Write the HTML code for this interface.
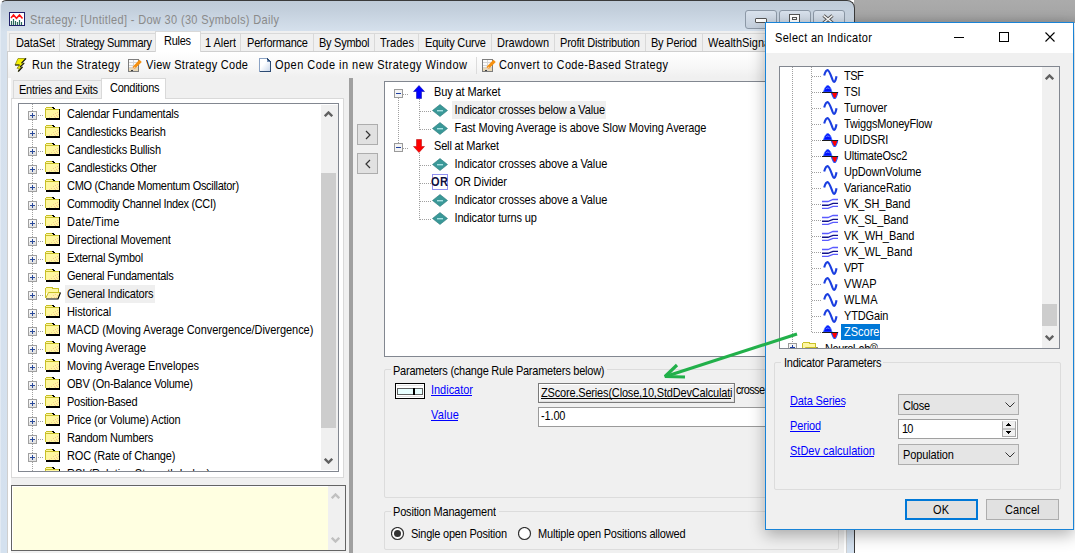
<!DOCTYPE html>
<html><head><meta charset="utf-8"><style>
html,body{margin:0;padding:0;width:1075px;height:553px;overflow:hidden;position:relative;background:#fff;font-family:"Liberation Sans", sans-serif;}
div,span,svg{position:absolute;box-sizing:border-box;}
.t{white-space:pre;line-height:normal;}
.ty{font-size:11px;transform:scaleY(1.12);transform-origin:0 0;}
</style></head><body>
<div style="left:854px;top:0px;width:221px;height:23px;background:linear-gradient(#ababab,#a6a6a6 60%,#9a9a9a);"></div>
<div style="left:0px;top:0px;width:855px;height:560px;background:linear-gradient(#bfcbd8 1px,#c4d0dd 10px,#d6e1ed 31px,#d4e1ef 100%);border:1px solid #3a3a3a;border-left-color:#e2eaf3;border-bottom:none;border-radius:6px 8px 0 0;"></div>
<svg style="position:absolute;left:9px;top:12px;" width="16" height="14" viewBox="0 0 16 14"><rect x="0.5" y="0.5" width="15" height="13" fill="#fff" stroke="#20206a"/><polyline points="2,6 4.5,3 7.5,6.3 10.5,3 13.5,6.5" fill="none" stroke="#ff1010" stroke-width="1.5"/><path d="M2.5,13 V9 M4.5,13 V7 M6.5,13 V9 M8.5,13 V10 M10.5,13 V8 M12.5,13 V10" stroke="#2a6a5c" stroke-width="1.2"/></svg>
<span id="t0" class="t ty" style="letter-spacing:0.342px;left:30px;top:13px;color:#8a8a8a;">Strategy: [Untitled] - Dow 30 (30 Symbols) Daily</span>
<div style="left:745px;top:10px;width:32px;height:19px;border:1px solid #8c98a6;border-radius:3px;background:linear-gradient(#d8e1ec,#c3cedb);"></div>
<div style="left:779px;top:10px;width:32px;height:19px;border:1px solid #8c98a6;border-radius:3px;background:linear-gradient(#d8e1ec,#c3cedb);"></div>
<div style="left:813px;top:10px;width:32px;height:19px;border:1px solid #8c98a6;border-radius:3px;background:linear-gradient(#d8e1ec,#c3cedb);"></div>
<div style="left:755px;top:18px;width:12px;height:5px;background:#fff;border:1px solid #555;border-radius:1px;"></div>
<div style="left:789px;top:14px;width:11px;height:10px;border:1px solid #555;background:#fff;"></div>
<div style="left:792px;top:17px;width:5px;height:3px;background:#fff;border:1px solid #555;"></div>
<svg style="position:absolute;left:822px;top:14px;" width="12" height="10" viewBox="0 0 12 10"><path d="M1.5,1.5 L10.5,9 M10.5,1.5 L1.5,9" stroke="#555" stroke-width="3.4"/><path d="M1.5,1.5 L10.5,9 M10.5,1.5 L1.5,9" stroke="#fff" stroke-width="1.6"/></svg>
<div style="left:7px;top:31px;width:840px;height:530px;background:#f0f0f0;"></div>
<div style="left:9px;top:33px;width:51px;height:19px;background:#f0f0f0;border:1px solid #d9d9d9;border-bottom:none;"></div>
<span id="t1" class="t ty" style="letter-spacing:-0.125px;left:16px;top:36px;color:#000;">DataSet</span>
<div style="left:59px;top:33px;width:97px;height:19px;background:#f0f0f0;border:1px solid #d9d9d9;border-bottom:none;"></div>
<span id="t2" class="t ty" style="letter-spacing:-0.340px;left:66px;top:36px;color:#000;">Strategy Summary</span>
<div style="left:200px;top:33px;width:41px;height:19px;background:#f0f0f0;border:1px solid #d9d9d9;border-bottom:none;"></div>
<span id="t3" class="t ty" style="letter-spacing:-0.031px;left:205px;top:36px;color:#000;">1 Alert</span>
<div style="left:240px;top:33px;width:74px;height:19px;background:#f0f0f0;border:1px solid #d9d9d9;border-bottom:none;"></div>
<span id="t4" class="t ty" style="letter-spacing:-0.198px;left:247px;top:36px;color:#000;">Performance</span>
<div style="left:313px;top:33px;width:62px;height:19px;background:#f0f0f0;border:1px solid #d9d9d9;border-bottom:none;"></div>
<span id="t5" class="t ty" style="letter-spacing:-0.260px;left:319px;top:36px;color:#000;">By Symbol</span>
<div style="left:374px;top:33px;width:45px;height:19px;background:#f0f0f0;border:1px solid #d9d9d9;border-bottom:none;"></div>
<span id="t6" class="t ty" style="letter-spacing:0.034px;left:380px;top:36px;color:#000;">Trades</span>
<div style="left:418px;top:33px;width:74px;height:19px;background:#f0f0f0;border:1px solid #d9d9d9;border-bottom:none;"></div>
<span id="t7" class="t ty" style="letter-spacing:-0.180px;left:425px;top:36px;color:#000;">Equity Curve</span>
<div style="left:491px;top:33px;width:64px;height:19px;background:#f0f0f0;border:1px solid #d9d9d9;border-bottom:none;"></div>
<span id="t8" class="t ty" style="letter-spacing:0.004px;left:497px;top:36px;color:#000;">Drawdown</span>
<div style="left:554px;top:33px;width:92px;height:19px;background:#f0f0f0;border:1px solid #d9d9d9;border-bottom:none;"></div>
<span id="t9" class="t ty" style="letter-spacing:-0.209px;left:560px;top:36px;color:#000;">Profit Distribution</span>
<div style="left:645px;top:33px;width:58px;height:19px;background:#f0f0f0;border:1px solid #d9d9d9;border-bottom:none;"></div>
<span id="t10" class="t ty" style="letter-spacing:-0.213px;left:651px;top:36px;color:#000;">By Period</span>
<div style="left:702px;top:33px;width:99px;height:19px;background:#f0f0f0;border:1px solid #d9d9d9;border-bottom:none;"></div>
<span id="t11" class="t ty" style="left:708px;top:36px;color:#000;">WealthSignals</span>
<div style="left:7px;top:51px;width:840px;height:510px;background:#fff;border:1px solid #cfcfcf;"></div>
<div style="left:8px;top:52px;width:838px;height:26px;background:linear-gradient(#ffffff,#f7f7f7 60%,#efefef);"></div>
<div style="left:11px;top:77px;width:833px;height:480px;background:#f0f0f0;"></div>
<div style="left:155px;top:31px;width:46px;height:21px;background:#fff;border:1px solid #d9d9d9;border-bottom:none;"></div>
<span id="t12" class="t ty" style="letter-spacing:-0.281px;left:164px;top:34px;color:#000;">Rules</span>
<svg style="position:absolute;left:14px;top:57px;" width="13" height="15" viewBox="0 0 13 15"><path d="M4,1.5 L12,1.5 L7.5,6.2 L10.2,6.2 L6,10 L8.5,10 L4.3,14.5 L5.3,11.3 L3,11.3 L5.5,8 L1,8 Z" fill="#f6f000" stroke="#8a8a10" stroke-width="0.8"/><path d="M12,1.5 L7.5,6.2 M10.2,6.2 L6,10 M8.5,10 L4.3,14.5 M1,8 L5.5,8" fill="none" stroke="#1a1a1a" stroke-width="1.1"/></svg>
<span id="t13" class="t ty" style="letter-spacing:0.362px;left:32px;top:58px;color:#000;">Run the Strategy</span>
<svg style="position:absolute;left:128px;top:59px;" width="14" height="13" viewBox="0 0 14 13" shape-rendering="crispEdges"><rect x="0.5" y="0.5" width="10" height="12" fill="#fbfbfb" stroke="#7d7d7d"/><rect x="1" y="9" width="9" height="3" fill="#e8d8b6"/><path d="M1,3.5 H10 M1,6 H10 M1,8.5 H10 M5.5,1 V12" stroke="#d4d4d4"/><path d="M12.6,1.8 L5.6,9" stroke="#f5900f" stroke-width="3.2" shape-rendering="auto"/><path d="M6.8,7.6 L4.2,10.6 L3.6,11.4 L4.6,11 L7.6,8.6 Z" fill="#f4c8a0" shape-rendering="auto"/><rect x="3" y="11" width="2" height="1" fill="#404040"/></svg>
<span id="t14" class="t ty" style="letter-spacing:0.292px;left:146px;top:58px;color:#000;">View Strategy Code</span>
<svg style="position:absolute;left:259px;top:58px;shape-rendering:crispEdges;" width="12" height="14" viewBox="0 0 12 14"><defs><linearGradient id="dg" x1="0" y1="0" x2="1" y2="1"><stop offset="0.4" stop-color="#ffffff"/><stop offset="1" stop-color="#c8d6ea"/></linearGradient></defs><path d="M0.5,0.5 H8 L11.5,4 V13.5 H0.5 Z" fill="url(#dg)"/><path d="M0.5,13.5 V0.5 H8" fill="none" stroke="#8aa2c4"/><path d="M8,0.5 L11.5,4 V13.5 H0.5" fill="none" stroke="#2c4a72" stroke-width="1.1"/><path d="M8.5,1.5 V3.5 H10.5" fill="none" stroke="#5a7aa8" stroke-width="0.8"/></svg>
<span id="t15" class="t ty" style="letter-spacing:0.473px;left:275px;top:58px;color:#000;">Open Code in new Strategy Window</span>
<div style="left:476px;top:57px;width:1px;height:17px;background:#dcdcdc;"></div>
<svg style="position:absolute;left:482px;top:59px;" width="14" height="13" viewBox="0 0 14 13" shape-rendering="crispEdges"><rect x="0.5" y="0.5" width="10" height="12" fill="#fbfbfb" stroke="#7d7d7d"/><rect x="1" y="9" width="9" height="3" fill="#e8d8b6"/><path d="M1,3.5 H10 M1,6 H10 M1,8.5 H10 M5.5,1 V12" stroke="#d4d4d4"/><path d="M12.6,1.8 L5.6,9" stroke="#f5900f" stroke-width="3.2" shape-rendering="auto"/><path d="M6.8,7.6 L4.2,10.6 L3.6,11.4 L4.6,11 L7.6,8.6 Z" fill="#f4c8a0" shape-rendering="auto"/><rect x="3" y="11" width="2" height="1" fill="#404040"/></svg>
<span id="t16" class="t ty" style="letter-spacing:0.345px;left:499px;top:58px;color:#000;">Convert to Code-Based Strategy</span>
<div style="left:13px;top:80px;width:89px;height:19px;background:#f0f0f0;border:1px solid #d9d9d9;border-bottom:none;"></div>
<span id="t17" class="t ty" style="letter-spacing:-0.222px;left:19px;top:83px;color:#000;">Entries and Exits</span>
<div style="left:11px;top:98px;width:333px;height:380px;background:#fff;border:1px solid #d9d9d9;"></div>
<div style="left:101px;top:78px;width:65px;height:21px;background:#fff;border:1px solid #d9d9d9;border-bottom:none;"></div>
<span id="t18" class="t ty" style="letter-spacing:-0.276px;left:110px;top:81px;color:#000;">Conditions</span>
<div style="left:18px;top:103px;width:321px;height:369px;background:#fff;border:1px solid #828790;"></div>
<div style="left:19px;top:104px;width:302px;height:367px;overflow:hidden;">
<div style="left:13px;top:0px;width:1px;height:367px;background:repeating-linear-gradient(#a0a0a0 0 1px,transparent 1px 2px);"></div>
<svg style="position:absolute;left:9px;top:7px;" width="9" height="9" viewBox="0 0 9 9" shape-rendering="crispEdges"><rect x="0.5" y="0.5" width="8" height="8" fill="#f6f6f6" stroke="#a0a0a0"/><rect x="1" y="5" width="7" height="3" fill="#e4e4e4"/><path d="M2,4.5 H7 M4.5,2 V7" stroke="#2a4a9a"/></svg>
<div style="left:19px;top:11px;width:6px;height:1px;background:repeating-linear-gradient(90deg,#a0a0a0 0 1px,transparent 1px 2px);"></div>
<svg style="position:absolute;left:26px;top:2px;" width="16" height="14" viewBox="0 0 16 14" shape-rendering="crispEdges"><path d="M1,2 H8 L9,3 H14 V12 H1 Z" fill="#fff7a0"/><path d="M8,8 h1v1h-1z M10,7 h1v1h-1z M12,6 h1v1h-1z M11,9 h1v1h-1z M13,8 h1v1h-1z M9,10 h1v1h-1z M12,10 h1v1h-1z M6,10 h1v1h-1z M4,11 h1v1h-1z M10,11 h1v1h-1z" fill="#f8c890"/><path d="M0.5,12 V2.5 L1.5,1.5 H7.5 M0.5,3 V2 M1,3.5 H14" fill="none" stroke="#c8c028"/><path d="M7.5,1 L9.5,3 M14.5,3 V12.5 H1" fill="none" stroke="#000"/><path d="M1,13.5 H15" stroke="#000"/></svg>
<span id="t19" class="t ty" style="letter-spacing:-0.275px;left:48px;top:3px;color:#000;">Calendar Fundamentals</span>
<svg style="position:absolute;left:9px;top:25px;" width="9" height="9" viewBox="0 0 9 9" shape-rendering="crispEdges"><rect x="0.5" y="0.5" width="8" height="8" fill="#f6f6f6" stroke="#a0a0a0"/><rect x="1" y="5" width="7" height="3" fill="#e4e4e4"/><path d="M2,4.5 H7 M4.5,2 V7" stroke="#2a4a9a"/></svg>
<div style="left:19px;top:29px;width:6px;height:1px;background:repeating-linear-gradient(90deg,#a0a0a0 0 1px,transparent 1px 2px);"></div>
<svg style="position:absolute;left:26px;top:20px;" width="16" height="14" viewBox="0 0 16 14" shape-rendering="crispEdges"><path d="M1,2 H8 L9,3 H14 V12 H1 Z" fill="#fff7a0"/><path d="M8,8 h1v1h-1z M10,7 h1v1h-1z M12,6 h1v1h-1z M11,9 h1v1h-1z M13,8 h1v1h-1z M9,10 h1v1h-1z M12,10 h1v1h-1z M6,10 h1v1h-1z M4,11 h1v1h-1z M10,11 h1v1h-1z" fill="#f8c890"/><path d="M0.5,12 V2.5 L1.5,1.5 H7.5 M0.5,3 V2 M1,3.5 H14" fill="none" stroke="#c8c028"/><path d="M7.5,1 L9.5,3 M14.5,3 V12.5 H1" fill="none" stroke="#000"/><path d="M1,13.5 H15" stroke="#000"/></svg>
<span id="t20" class="t ty" style="letter-spacing:-0.201px;left:48px;top:21px;color:#000;">Candlesticks Bearish</span>
<svg style="position:absolute;left:9px;top:43px;" width="9" height="9" viewBox="0 0 9 9" shape-rendering="crispEdges"><rect x="0.5" y="0.5" width="8" height="8" fill="#f6f6f6" stroke="#a0a0a0"/><rect x="1" y="5" width="7" height="3" fill="#e4e4e4"/><path d="M2,4.5 H7 M4.5,2 V7" stroke="#2a4a9a"/></svg>
<div style="left:19px;top:47px;width:6px;height:1px;background:repeating-linear-gradient(90deg,#a0a0a0 0 1px,transparent 1px 2px);"></div>
<svg style="position:absolute;left:26px;top:38px;" width="16" height="14" viewBox="0 0 16 14" shape-rendering="crispEdges"><path d="M1,2 H8 L9,3 H14 V12 H1 Z" fill="#fff7a0"/><path d="M8,8 h1v1h-1z M10,7 h1v1h-1z M12,6 h1v1h-1z M11,9 h1v1h-1z M13,8 h1v1h-1z M9,10 h1v1h-1z M12,10 h1v1h-1z M6,10 h1v1h-1z M4,11 h1v1h-1z M10,11 h1v1h-1z" fill="#f8c890"/><path d="M0.5,12 V2.5 L1.5,1.5 H7.5 M0.5,3 V2 M1,3.5 H14" fill="none" stroke="#c8c028"/><path d="M7.5,1 L9.5,3 M14.5,3 V12.5 H1" fill="none" stroke="#000"/><path d="M1,13.5 H15" stroke="#000"/></svg>
<span id="t21" class="t ty" style="letter-spacing:-0.201px;left:48px;top:39px;color:#000;">Candlesticks Bullish</span>
<svg style="position:absolute;left:9px;top:61px;" width="9" height="9" viewBox="0 0 9 9" shape-rendering="crispEdges"><rect x="0.5" y="0.5" width="8" height="8" fill="#f6f6f6" stroke="#a0a0a0"/><rect x="1" y="5" width="7" height="3" fill="#e4e4e4"/><path d="M2,4.5 H7 M4.5,2 V7" stroke="#2a4a9a"/></svg>
<div style="left:19px;top:65px;width:6px;height:1px;background:repeating-linear-gradient(90deg,#a0a0a0 0 1px,transparent 1px 2px);"></div>
<svg style="position:absolute;left:26px;top:56px;" width="16" height="14" viewBox="0 0 16 14" shape-rendering="crispEdges"><path d="M1,2 H8 L9,3 H14 V12 H1 Z" fill="#fff7a0"/><path d="M8,8 h1v1h-1z M10,7 h1v1h-1z M12,6 h1v1h-1z M11,9 h1v1h-1z M13,8 h1v1h-1z M9,10 h1v1h-1z M12,10 h1v1h-1z M6,10 h1v1h-1z M4,11 h1v1h-1z M10,11 h1v1h-1z" fill="#f8c890"/><path d="M0.5,12 V2.5 L1.5,1.5 H7.5 M0.5,3 V2 M1,3.5 H14" fill="none" stroke="#c8c028"/><path d="M7.5,1 L9.5,3 M14.5,3 V12.5 H1" fill="none" stroke="#000"/><path d="M1,13.5 H15" stroke="#000"/></svg>
<span id="t22" class="t ty" style="letter-spacing:-0.185px;left:48px;top:57px;color:#000;">Candlesticks Other</span>
<svg style="position:absolute;left:9px;top:79px;" width="9" height="9" viewBox="0 0 9 9" shape-rendering="crispEdges"><rect x="0.5" y="0.5" width="8" height="8" fill="#f6f6f6" stroke="#a0a0a0"/><rect x="1" y="5" width="7" height="3" fill="#e4e4e4"/><path d="M2,4.5 H7 M4.5,2 V7" stroke="#2a4a9a"/></svg>
<div style="left:19px;top:83px;width:6px;height:1px;background:repeating-linear-gradient(90deg,#a0a0a0 0 1px,transparent 1px 2px);"></div>
<svg style="position:absolute;left:26px;top:74px;" width="16" height="14" viewBox="0 0 16 14" shape-rendering="crispEdges"><path d="M1,2 H8 L9,3 H14 V12 H1 Z" fill="#fff7a0"/><path d="M8,8 h1v1h-1z M10,7 h1v1h-1z M12,6 h1v1h-1z M11,9 h1v1h-1z M13,8 h1v1h-1z M9,10 h1v1h-1z M12,10 h1v1h-1z M6,10 h1v1h-1z M4,11 h1v1h-1z M10,11 h1v1h-1z" fill="#f8c890"/><path d="M0.5,12 V2.5 L1.5,1.5 H7.5 M0.5,3 V2 M1,3.5 H14" fill="none" stroke="#c8c028"/><path d="M7.5,1 L9.5,3 M14.5,3 V12.5 H1" fill="none" stroke="#000"/><path d="M1,13.5 H15" stroke="#000"/></svg>
<span id="t23" class="t ty" style="letter-spacing:-0.305px;left:48px;top:75px;color:#000;">CMO (Chande Momentum Oscillator)</span>
<svg style="position:absolute;left:9px;top:97px;" width="9" height="9" viewBox="0 0 9 9" shape-rendering="crispEdges"><rect x="0.5" y="0.5" width="8" height="8" fill="#f6f6f6" stroke="#a0a0a0"/><rect x="1" y="5" width="7" height="3" fill="#e4e4e4"/><path d="M2,4.5 H7 M4.5,2 V7" stroke="#2a4a9a"/></svg>
<div style="left:19px;top:101px;width:6px;height:1px;background:repeating-linear-gradient(90deg,#a0a0a0 0 1px,transparent 1px 2px);"></div>
<svg style="position:absolute;left:26px;top:92px;" width="16" height="14" viewBox="0 0 16 14" shape-rendering="crispEdges"><path d="M1,2 H8 L9,3 H14 V12 H1 Z" fill="#fff7a0"/><path d="M8,8 h1v1h-1z M10,7 h1v1h-1z M12,6 h1v1h-1z M11,9 h1v1h-1z M13,8 h1v1h-1z M9,10 h1v1h-1z M12,10 h1v1h-1z M6,10 h1v1h-1z M4,11 h1v1h-1z M10,11 h1v1h-1z" fill="#f8c890"/><path d="M0.5,12 V2.5 L1.5,1.5 H7.5 M0.5,3 V2 M1,3.5 H14" fill="none" stroke="#c8c028"/><path d="M7.5,1 L9.5,3 M14.5,3 V12.5 H1" fill="none" stroke="#000"/><path d="M1,13.5 H15" stroke="#000"/></svg>
<span id="t24" class="t ty" style="letter-spacing:-0.345px;left:48px;top:93px;color:#000;">Commodity Channel Index (CCI)</span>
<svg style="position:absolute;left:9px;top:115px;" width="9" height="9" viewBox="0 0 9 9" shape-rendering="crispEdges"><rect x="0.5" y="0.5" width="8" height="8" fill="#f6f6f6" stroke="#a0a0a0"/><rect x="1" y="5" width="7" height="3" fill="#e4e4e4"/><path d="M2,4.5 H7 M4.5,2 V7" stroke="#2a4a9a"/></svg>
<div style="left:19px;top:119px;width:6px;height:1px;background:repeating-linear-gradient(90deg,#a0a0a0 0 1px,transparent 1px 2px);"></div>
<svg style="position:absolute;left:26px;top:110px;" width="16" height="14" viewBox="0 0 16 14" shape-rendering="crispEdges"><path d="M1,2 H8 L9,3 H14 V12 H1 Z" fill="#fff7a0"/><path d="M8,8 h1v1h-1z M10,7 h1v1h-1z M12,6 h1v1h-1z M11,9 h1v1h-1z M13,8 h1v1h-1z M9,10 h1v1h-1z M12,10 h1v1h-1z M6,10 h1v1h-1z M4,11 h1v1h-1z M10,11 h1v1h-1z" fill="#f8c890"/><path d="M0.5,12 V2.5 L1.5,1.5 H7.5 M0.5,3 V2 M1,3.5 H14" fill="none" stroke="#c8c028"/><path d="M7.5,1 L9.5,3 M14.5,3 V12.5 H1" fill="none" stroke="#000"/><path d="M1,13.5 H15" stroke="#000"/></svg>
<span id="t25" class="t ty" style="letter-spacing:0.259px;left:48px;top:111px;color:#000;">Date/Time</span>
<svg style="position:absolute;left:9px;top:133px;" width="9" height="9" viewBox="0 0 9 9" shape-rendering="crispEdges"><rect x="0.5" y="0.5" width="8" height="8" fill="#f6f6f6" stroke="#a0a0a0"/><rect x="1" y="5" width="7" height="3" fill="#e4e4e4"/><path d="M2,4.5 H7 M4.5,2 V7" stroke="#2a4a9a"/></svg>
<div style="left:19px;top:137px;width:6px;height:1px;background:repeating-linear-gradient(90deg,#a0a0a0 0 1px,transparent 1px 2px);"></div>
<svg style="position:absolute;left:26px;top:128px;" width="16" height="14" viewBox="0 0 16 14" shape-rendering="crispEdges"><path d="M1,2 H8 L9,3 H14 V12 H1 Z" fill="#fff7a0"/><path d="M8,8 h1v1h-1z M10,7 h1v1h-1z M12,6 h1v1h-1z M11,9 h1v1h-1z M13,8 h1v1h-1z M9,10 h1v1h-1z M12,10 h1v1h-1z M6,10 h1v1h-1z M4,11 h1v1h-1z M10,11 h1v1h-1z" fill="#f8c890"/><path d="M0.5,12 V2.5 L1.5,1.5 H7.5 M0.5,3 V2 M1,3.5 H14" fill="none" stroke="#c8c028"/><path d="M7.5,1 L9.5,3 M14.5,3 V12.5 H1" fill="none" stroke="#000"/><path d="M1,13.5 H15" stroke="#000"/></svg>
<span id="t26" class="t ty" style="letter-spacing:-0.136px;left:48px;top:129px;color:#000;">Directional Movement</span>
<svg style="position:absolute;left:9px;top:151px;" width="9" height="9" viewBox="0 0 9 9" shape-rendering="crispEdges"><rect x="0.5" y="0.5" width="8" height="8" fill="#f6f6f6" stroke="#a0a0a0"/><rect x="1" y="5" width="7" height="3" fill="#e4e4e4"/><path d="M2,4.5 H7 M4.5,2 V7" stroke="#2a4a9a"/></svg>
<div style="left:19px;top:155px;width:6px;height:1px;background:repeating-linear-gradient(90deg,#a0a0a0 0 1px,transparent 1px 2px);"></div>
<svg style="position:absolute;left:26px;top:146px;" width="16" height="14" viewBox="0 0 16 14" shape-rendering="crispEdges"><path d="M1,2 H8 L9,3 H14 V12 H1 Z" fill="#fff7a0"/><path d="M8,8 h1v1h-1z M10,7 h1v1h-1z M12,6 h1v1h-1z M11,9 h1v1h-1z M13,8 h1v1h-1z M9,10 h1v1h-1z M12,10 h1v1h-1z M6,10 h1v1h-1z M4,11 h1v1h-1z M10,11 h1v1h-1z" fill="#f8c890"/><path d="M0.5,12 V2.5 L1.5,1.5 H7.5 M0.5,3 V2 M1,3.5 H14" fill="none" stroke="#c8c028"/><path d="M7.5,1 L9.5,3 M14.5,3 V12.5 H1" fill="none" stroke="#000"/><path d="M1,13.5 H15" stroke="#000"/></svg>
<span id="t27" class="t ty" style="letter-spacing:-0.285px;left:48px;top:147px;color:#000;">External Symbol</span>
<svg style="position:absolute;left:9px;top:169px;" width="9" height="9" viewBox="0 0 9 9" shape-rendering="crispEdges"><rect x="0.5" y="0.5" width="8" height="8" fill="#f6f6f6" stroke="#a0a0a0"/><rect x="1" y="5" width="7" height="3" fill="#e4e4e4"/><path d="M2,4.5 H7 M4.5,2 V7" stroke="#2a4a9a"/></svg>
<div style="left:19px;top:173px;width:6px;height:1px;background:repeating-linear-gradient(90deg,#a0a0a0 0 1px,transparent 1px 2px);"></div>
<svg style="position:absolute;left:26px;top:164px;" width="16" height="14" viewBox="0 0 16 14" shape-rendering="crispEdges"><path d="M1,2 H8 L9,3 H14 V12 H1 Z" fill="#fff7a0"/><path d="M8,8 h1v1h-1z M10,7 h1v1h-1z M12,6 h1v1h-1z M11,9 h1v1h-1z M13,8 h1v1h-1z M9,10 h1v1h-1z M12,10 h1v1h-1z M6,10 h1v1h-1z M4,11 h1v1h-1z M10,11 h1v1h-1z" fill="#f8c890"/><path d="M0.5,12 V2.5 L1.5,1.5 H7.5 M0.5,3 V2 M1,3.5 H14" fill="none" stroke="#c8c028"/><path d="M7.5,1 L9.5,3 M14.5,3 V12.5 H1" fill="none" stroke="#000"/><path d="M1,13.5 H15" stroke="#000"/></svg>
<span id="t28" class="t ty" style="letter-spacing:-0.274px;left:48px;top:165px;color:#000;">General Fundamentals</span>
<svg style="position:absolute;left:9px;top:187px;" width="9" height="9" viewBox="0 0 9 9" shape-rendering="crispEdges"><rect x="0.5" y="0.5" width="8" height="8" fill="#f6f6f6" stroke="#a0a0a0"/><rect x="1" y="5" width="7" height="3" fill="#e4e4e4"/><path d="M2,4.5 H7 M4.5,2 V7" stroke="#2a4a9a"/></svg>
<div style="left:19px;top:191px;width:6px;height:1px;background:repeating-linear-gradient(90deg,#a0a0a0 0 1px,transparent 1px 2px);"></div>
<div style="left:46px;top:181px;width:90px;height:18px;background:#efefef;"></div>
<svg style="position:absolute;left:26px;top:182px;" width="16" height="14" viewBox="0 0 16 14" shape-rendering="crispEdges"><path d="M1,2 H7 L8,3 H13 V7 H1 Z" fill="#fff7a0"/><path d="M0.5,12 V2.5 L1.5,1.5 H7 L8,2.5 H13.5 V6" fill="none" stroke="#c8c028"/><path d="M3.5,6.5 H15.5 L13,12.5 H0.8 Z" fill="#fff3a8" shape-rendering="auto"/><path d="M8,9 h1v1h-1z M10,8 h1v1h-1z M12,9 h1v1h-1z M9,11 h1v1h-1z M11,11 h1v1h-1z M6,11 h1v1h-1z" fill="#f8c890"/><path d="M3.5,6.5 H15 M0.8,12 L3.5,6.5" fill="none" stroke="#c8c028" shape-rendering="auto"/><path d="M15.5,6.5 L13,13 H1" fill="none" stroke="#000" stroke-width="1.2" shape-rendering="auto"/></svg>
<span id="t29" class="t ty" style="letter-spacing:-0.199px;left:48px;top:183px;color:#000;">General Indicators</span>
<svg style="position:absolute;left:9px;top:205px;" width="9" height="9" viewBox="0 0 9 9" shape-rendering="crispEdges"><rect x="0.5" y="0.5" width="8" height="8" fill="#f6f6f6" stroke="#a0a0a0"/><rect x="1" y="5" width="7" height="3" fill="#e4e4e4"/><path d="M2,4.5 H7 M4.5,2 V7" stroke="#2a4a9a"/></svg>
<div style="left:19px;top:209px;width:6px;height:1px;background:repeating-linear-gradient(90deg,#a0a0a0 0 1px,transparent 1px 2px);"></div>
<svg style="position:absolute;left:26px;top:200px;" width="16" height="14" viewBox="0 0 16 14" shape-rendering="crispEdges"><path d="M1,2 H8 L9,3 H14 V12 H1 Z" fill="#fff7a0"/><path d="M8,8 h1v1h-1z M10,7 h1v1h-1z M12,6 h1v1h-1z M11,9 h1v1h-1z M13,8 h1v1h-1z M9,10 h1v1h-1z M12,10 h1v1h-1z M6,10 h1v1h-1z M4,11 h1v1h-1z M10,11 h1v1h-1z" fill="#f8c890"/><path d="M0.5,12 V2.5 L1.5,1.5 H7.5 M0.5,3 V2 M1,3.5 H14" fill="none" stroke="#c8c028"/><path d="M7.5,1 L9.5,3 M14.5,3 V12.5 H1" fill="none" stroke="#000"/><path d="M1,13.5 H15" stroke="#000"/></svg>
<span id="t30" class="t ty" style="letter-spacing:-0.115px;left:48px;top:201px;color:#000;">Historical</span>
<svg style="position:absolute;left:9px;top:223px;" width="9" height="9" viewBox="0 0 9 9" shape-rendering="crispEdges"><rect x="0.5" y="0.5" width="8" height="8" fill="#f6f6f6" stroke="#a0a0a0"/><rect x="1" y="5" width="7" height="3" fill="#e4e4e4"/><path d="M2,4.5 H7 M4.5,2 V7" stroke="#2a4a9a"/></svg>
<div style="left:19px;top:227px;width:6px;height:1px;background:repeating-linear-gradient(90deg,#a0a0a0 0 1px,transparent 1px 2px);"></div>
<svg style="position:absolute;left:26px;top:218px;" width="16" height="14" viewBox="0 0 16 14" shape-rendering="crispEdges"><path d="M1,2 H8 L9,3 H14 V12 H1 Z" fill="#fff7a0"/><path d="M8,8 h1v1h-1z M10,7 h1v1h-1z M12,6 h1v1h-1z M11,9 h1v1h-1z M13,8 h1v1h-1z M9,10 h1v1h-1z M12,10 h1v1h-1z M6,10 h1v1h-1z M4,11 h1v1h-1z M10,11 h1v1h-1z" fill="#f8c890"/><path d="M0.5,12 V2.5 L1.5,1.5 H7.5 M0.5,3 V2 M1,3.5 H14" fill="none" stroke="#c8c028"/><path d="M7.5,1 L9.5,3 M14.5,3 V12.5 H1" fill="none" stroke="#000"/><path d="M1,13.5 H15" stroke="#000"/></svg>
<span id="t31" class="t ty" style="letter-spacing:-0.054px;left:48px;top:219px;color:#000;">MACD (Moving Average Convergence/Divergence)</span>
<svg style="position:absolute;left:9px;top:241px;" width="9" height="9" viewBox="0 0 9 9" shape-rendering="crispEdges"><rect x="0.5" y="0.5" width="8" height="8" fill="#f6f6f6" stroke="#a0a0a0"/><rect x="1" y="5" width="7" height="3" fill="#e4e4e4"/><path d="M2,4.5 H7 M4.5,2 V7" stroke="#2a4a9a"/></svg>
<div style="left:19px;top:245px;width:6px;height:1px;background:repeating-linear-gradient(90deg,#a0a0a0 0 1px,transparent 1px 2px);"></div>
<svg style="position:absolute;left:26px;top:236px;" width="16" height="14" viewBox="0 0 16 14" shape-rendering="crispEdges"><path d="M1,2 H8 L9,3 H14 V12 H1 Z" fill="#fff7a0"/><path d="M8,8 h1v1h-1z M10,7 h1v1h-1z M12,6 h1v1h-1z M11,9 h1v1h-1z M13,8 h1v1h-1z M9,10 h1v1h-1z M12,10 h1v1h-1z M6,10 h1v1h-1z M4,11 h1v1h-1z M10,11 h1v1h-1z" fill="#f8c890"/><path d="M0.5,12 V2.5 L1.5,1.5 H7.5 M0.5,3 V2 M1,3.5 H14" fill="none" stroke="#c8c028"/><path d="M7.5,1 L9.5,3 M14.5,3 V12.5 H1" fill="none" stroke="#000"/><path d="M1,13.5 H15" stroke="#000"/></svg>
<span id="t32" class="t ty" style="letter-spacing:0.032px;left:48px;top:237px;color:#000;">Moving Average</span>
<svg style="position:absolute;left:9px;top:259px;" width="9" height="9" viewBox="0 0 9 9" shape-rendering="crispEdges"><rect x="0.5" y="0.5" width="8" height="8" fill="#f6f6f6" stroke="#a0a0a0"/><rect x="1" y="5" width="7" height="3" fill="#e4e4e4"/><path d="M2,4.5 H7 M4.5,2 V7" stroke="#2a4a9a"/></svg>
<div style="left:19px;top:263px;width:6px;height:1px;background:repeating-linear-gradient(90deg,#a0a0a0 0 1px,transparent 1px 2px);"></div>
<svg style="position:absolute;left:26px;top:254px;" width="16" height="14" viewBox="0 0 16 14" shape-rendering="crispEdges"><path d="M1,2 H8 L9,3 H14 V12 H1 Z" fill="#fff7a0"/><path d="M8,8 h1v1h-1z M10,7 h1v1h-1z M12,6 h1v1h-1z M11,9 h1v1h-1z M13,8 h1v1h-1z M9,10 h1v1h-1z M12,10 h1v1h-1z M6,10 h1v1h-1z M4,11 h1v1h-1z M10,11 h1v1h-1z" fill="#f8c890"/><path d="M0.5,12 V2.5 L1.5,1.5 H7.5 M0.5,3 V2 M1,3.5 H14" fill="none" stroke="#c8c028"/><path d="M7.5,1 L9.5,3 M14.5,3 V12.5 H1" fill="none" stroke="#000"/><path d="M1,13.5 H15" stroke="#000"/></svg>
<span id="t33" class="t ty" style="letter-spacing:-0.048px;left:48px;top:255px;color:#000;">Moving Average Envelopes</span>
<svg style="position:absolute;left:9px;top:277px;" width="9" height="9" viewBox="0 0 9 9" shape-rendering="crispEdges"><rect x="0.5" y="0.5" width="8" height="8" fill="#f6f6f6" stroke="#a0a0a0"/><rect x="1" y="5" width="7" height="3" fill="#e4e4e4"/><path d="M2,4.5 H7 M4.5,2 V7" stroke="#2a4a9a"/></svg>
<div style="left:19px;top:281px;width:6px;height:1px;background:repeating-linear-gradient(90deg,#a0a0a0 0 1px,transparent 1px 2px);"></div>
<svg style="position:absolute;left:26px;top:272px;" width="16" height="14" viewBox="0 0 16 14" shape-rendering="crispEdges"><path d="M1,2 H8 L9,3 H14 V12 H1 Z" fill="#fff7a0"/><path d="M8,8 h1v1h-1z M10,7 h1v1h-1z M12,6 h1v1h-1z M11,9 h1v1h-1z M13,8 h1v1h-1z M9,10 h1v1h-1z M12,10 h1v1h-1z M6,10 h1v1h-1z M4,11 h1v1h-1z M10,11 h1v1h-1z" fill="#f8c890"/><path d="M0.5,12 V2.5 L1.5,1.5 H7.5 M0.5,3 V2 M1,3.5 H14" fill="none" stroke="#c8c028"/><path d="M7.5,1 L9.5,3 M14.5,3 V12.5 H1" fill="none" stroke="#000"/><path d="M1,13.5 H15" stroke="#000"/></svg>
<span id="t34" class="t ty" style="letter-spacing:-0.248px;left:48px;top:273px;color:#000;">OBV (On-Balance Volume)</span>
<svg style="position:absolute;left:9px;top:295px;" width="9" height="9" viewBox="0 0 9 9" shape-rendering="crispEdges"><rect x="0.5" y="0.5" width="8" height="8" fill="#f6f6f6" stroke="#a0a0a0"/><rect x="1" y="5" width="7" height="3" fill="#e4e4e4"/><path d="M2,4.5 H7 M4.5,2 V7" stroke="#2a4a9a"/></svg>
<div style="left:19px;top:299px;width:6px;height:1px;background:repeating-linear-gradient(90deg,#a0a0a0 0 1px,transparent 1px 2px);"></div>
<svg style="position:absolute;left:26px;top:290px;" width="16" height="14" viewBox="0 0 16 14" shape-rendering="crispEdges"><path d="M1,2 H8 L9,3 H14 V12 H1 Z" fill="#fff7a0"/><path d="M8,8 h1v1h-1z M10,7 h1v1h-1z M12,6 h1v1h-1z M11,9 h1v1h-1z M13,8 h1v1h-1z M9,10 h1v1h-1z M12,10 h1v1h-1z M6,10 h1v1h-1z M4,11 h1v1h-1z M10,11 h1v1h-1z" fill="#f8c890"/><path d="M0.5,12 V2.5 L1.5,1.5 H7.5 M0.5,3 V2 M1,3.5 H14" fill="none" stroke="#c8c028"/><path d="M7.5,1 L9.5,3 M14.5,3 V12.5 H1" fill="none" stroke="#000"/><path d="M1,13.5 H15" stroke="#000"/></svg>
<span id="t35" class="t ty" style="letter-spacing:-0.262px;left:48px;top:291px;color:#000;">Position-Based</span>
<svg style="position:absolute;left:9px;top:313px;" width="9" height="9" viewBox="0 0 9 9" shape-rendering="crispEdges"><rect x="0.5" y="0.5" width="8" height="8" fill="#f6f6f6" stroke="#a0a0a0"/><rect x="1" y="5" width="7" height="3" fill="#e4e4e4"/><path d="M2,4.5 H7 M4.5,2 V7" stroke="#2a4a9a"/></svg>
<div style="left:19px;top:317px;width:6px;height:1px;background:repeating-linear-gradient(90deg,#a0a0a0 0 1px,transparent 1px 2px);"></div>
<svg style="position:absolute;left:26px;top:308px;" width="16" height="14" viewBox="0 0 16 14" shape-rendering="crispEdges"><path d="M1,2 H8 L9,3 H14 V12 H1 Z" fill="#fff7a0"/><path d="M8,8 h1v1h-1z M10,7 h1v1h-1z M12,6 h1v1h-1z M11,9 h1v1h-1z M13,8 h1v1h-1z M9,10 h1v1h-1z M12,10 h1v1h-1z M6,10 h1v1h-1z M4,11 h1v1h-1z M10,11 h1v1h-1z" fill="#f8c890"/><path d="M0.5,12 V2.5 L1.5,1.5 H7.5 M0.5,3 V2 M1,3.5 H14" fill="none" stroke="#c8c028"/><path d="M7.5,1 L9.5,3 M14.5,3 V12.5 H1" fill="none" stroke="#000"/><path d="M1,13.5 H15" stroke="#000"/></svg>
<span id="t36" class="t ty" style="letter-spacing:-0.191px;left:48px;top:309px;color:#000;">Price (or Volume) Action</span>
<svg style="position:absolute;left:9px;top:331px;" width="9" height="9" viewBox="0 0 9 9" shape-rendering="crispEdges"><rect x="0.5" y="0.5" width="8" height="8" fill="#f6f6f6" stroke="#a0a0a0"/><rect x="1" y="5" width="7" height="3" fill="#e4e4e4"/><path d="M2,4.5 H7 M4.5,2 V7" stroke="#2a4a9a"/></svg>
<div style="left:19px;top:335px;width:6px;height:1px;background:repeating-linear-gradient(90deg,#a0a0a0 0 1px,transparent 1px 2px);"></div>
<svg style="position:absolute;left:26px;top:326px;" width="16" height="14" viewBox="0 0 16 14" shape-rendering="crispEdges"><path d="M1,2 H8 L9,3 H14 V12 H1 Z" fill="#fff7a0"/><path d="M8,8 h1v1h-1z M10,7 h1v1h-1z M12,6 h1v1h-1z M11,9 h1v1h-1z M13,8 h1v1h-1z M9,10 h1v1h-1z M12,10 h1v1h-1z M6,10 h1v1h-1z M4,11 h1v1h-1z M10,11 h1v1h-1z" fill="#f8c890"/><path d="M0.5,12 V2.5 L1.5,1.5 H7.5 M0.5,3 V2 M1,3.5 H14" fill="none" stroke="#c8c028"/><path d="M7.5,1 L9.5,3 M14.5,3 V12.5 H1" fill="none" stroke="#000"/><path d="M1,13.5 H15" stroke="#000"/></svg>
<span id="t37" class="t ty" style="letter-spacing:-0.236px;left:48px;top:327px;color:#000;">Random Numbers</span>
<svg style="position:absolute;left:9px;top:349px;" width="9" height="9" viewBox="0 0 9 9" shape-rendering="crispEdges"><rect x="0.5" y="0.5" width="8" height="8" fill="#f6f6f6" stroke="#a0a0a0"/><rect x="1" y="5" width="7" height="3" fill="#e4e4e4"/><path d="M2,4.5 H7 M4.5,2 V7" stroke="#2a4a9a"/></svg>
<div style="left:19px;top:353px;width:6px;height:1px;background:repeating-linear-gradient(90deg,#a0a0a0 0 1px,transparent 1px 2px);"></div>
<svg style="position:absolute;left:26px;top:344px;" width="16" height="14" viewBox="0 0 16 14" shape-rendering="crispEdges"><path d="M1,2 H8 L9,3 H14 V12 H1 Z" fill="#fff7a0"/><path d="M8,8 h1v1h-1z M10,7 h1v1h-1z M12,6 h1v1h-1z M11,9 h1v1h-1z M13,8 h1v1h-1z M9,10 h1v1h-1z M12,10 h1v1h-1z M6,10 h1v1h-1z M4,11 h1v1h-1z M10,11 h1v1h-1z" fill="#f8c890"/><path d="M0.5,12 V2.5 L1.5,1.5 H7.5 M0.5,3 V2 M1,3.5 H14" fill="none" stroke="#c8c028"/><path d="M7.5,1 L9.5,3 M14.5,3 V12.5 H1" fill="none" stroke="#000"/><path d="M1,13.5 H15" stroke="#000"/></svg>
<span id="t38" class="t ty" style="letter-spacing:-0.184px;left:48px;top:345px;color:#000;">ROC (Rate of Change)</span>
<svg style="position:absolute;left:9px;top:367px;" width="9" height="9" viewBox="0 0 9 9" shape-rendering="crispEdges"><rect x="0.5" y="0.5" width="8" height="8" fill="#f6f6f6" stroke="#a0a0a0"/><rect x="1" y="5" width="7" height="3" fill="#e4e4e4"/><path d="M2,4.5 H7 M4.5,2 V7" stroke="#2a4a9a"/></svg>
<div style="left:19px;top:371px;width:6px;height:1px;background:repeating-linear-gradient(90deg,#a0a0a0 0 1px,transparent 1px 2px);"></div>
<svg style="position:absolute;left:26px;top:362px;" width="16" height="14" viewBox="0 0 16 14" shape-rendering="crispEdges"><path d="M1,2 H8 L9,3 H14 V12 H1 Z" fill="#fff7a0"/><path d="M8,8 h1v1h-1z M10,7 h1v1h-1z M12,6 h1v1h-1z M11,9 h1v1h-1z M13,8 h1v1h-1z M9,10 h1v1h-1z M12,10 h1v1h-1z M6,10 h1v1h-1z M4,11 h1v1h-1z M10,11 h1v1h-1z" fill="#f8c890"/><path d="M0.5,12 V2.5 L1.5,1.5 H7.5 M0.5,3 V2 M1,3.5 H14" fill="none" stroke="#c8c028"/><path d="M7.5,1 L9.5,3 M14.5,3 V12.5 H1" fill="none" stroke="#000"/><path d="M1,13.5 H15" stroke="#000"/></svg>
<span id="t39" class="t ty" style="left:48px;top:363px;color:#000;">RSI (Relative Strength Index)</span>
</div>
<div style="left:321px;top:105px;width:17px;height:365px;background:#f0f0f0;"></div>
<div style="left:321px;top:173px;width:15px;height:255px;background:#cdcdcd;"></div>
<svg style="position:absolute;left:324px;top:111px;" width="9" height="6" viewBox="0 0 9 6"><path d="M0.8,5.2 L4.5,1.5 L8.2,5.2" fill="none" stroke="#606060" stroke-width="2.4" shape-rendering="auto"/></svg>
<svg style="position:absolute;left:324px;top:458px;" width="9" height="6" viewBox="0 0 9 6"><path d="M0.8,0.8 L4.5,4.5 L8.2,0.8" fill="none" stroke="#606060" stroke-width="2.4" shape-rendering="auto"/></svg>
<div style="left:11px;top:485px;width:335px;height:66px;background:#ffffe1;border:1px solid #646464;box-shadow:inset 1px 1px 0 #fff;"></div>
<div style="left:328px;top:486px;width:17px;height:64px;background:#f0f0f0;"></div>
<svg style="position:absolute;left:331px;top:493px;" width="9" height="6" viewBox="0 0 9 6"><path d="M0.8,5.2 L4.5,1.5 L8.2,5.2" fill="none" stroke="#c0c0c0" stroke-width="2.4" shape-rendering="auto"/></svg>
<svg style="position:absolute;left:331px;top:537px;" width="9" height="6" viewBox="0 0 9 6"><path d="M0.8,0.8 L4.5,4.5 L8.2,0.8" fill="none" stroke="#c0c0c0" stroke-width="2.4" shape-rendering="auto"/></svg>
<div style="left:349px;top:78px;width:4px;height:480px;background:#a0a0a0;"></div>
<div style="left:357px;top:124px;width:21px;height:21px;background:#e1e1e1;border:1px solid #adadad;"></div>
<div style="left:357px;top:153px;width:21px;height:21px;background:#e1e1e1;border:1px solid #adadad;"></div>
<svg style="position:absolute;left:364px;top:130px;" width="8" height="10" viewBox="0 0 8 10"><path d="M2,1 L6,5 L2,9" fill="none" stroke="#333" stroke-width="1.2"/></svg>
<svg style="position:absolute;left:364px;top:159px;" width="8" height="10" viewBox="0 0 8 10"><path d="M6,1 L2,5 L6,9" fill="none" stroke="#333" stroke-width="1.2"/></svg>
<div style="left:384px;top:81px;width:460px;height:276px;background:#fff;border:1px solid #828790;"></div>
<div style="left:385px;top:82px;width:450px;height:274px;overflow:hidden;">
<div style="left:13px;top:16px;width:1px;height:45px;background:repeating-linear-gradient(#a0a0a0 0 1px,transparent 1px 2px);"></div>
<svg style="position:absolute;left:9px;top:7px;" width="9" height="9" viewBox="0 0 9 9" shape-rendering="crispEdges"><rect x="0.5" y="0.5" width="8" height="8" fill="#f4f4f4" stroke="#9a9a9a"/><path d="M2,4.5 H7" stroke="#2040a0"/></svg>
<div style="left:18px;top:12px;width:6px;height:1px;background:repeating-linear-gradient(90deg,#a0a0a0 0 1px,transparent 1px 2px);"></div>
<svg style="position:absolute;left:9px;top:61px;" width="9" height="9" viewBox="0 0 9 9" shape-rendering="crispEdges"><rect x="0.5" y="0.5" width="8" height="8" fill="#f4f4f4" stroke="#9a9a9a"/><path d="M2,4.5 H7" stroke="#2040a0"/></svg>
<div style="left:18px;top:66px;width:6px;height:1px;background:repeating-linear-gradient(90deg,#a0a0a0 0 1px,transparent 1px 2px);"></div>
<div style="left:34px;top:17px;width:1px;height:31px;background:repeating-linear-gradient(#a0a0a0 0 1px,transparent 1px 2px);"></div>
<div style="left:34px;top:71px;width:1px;height:67px;background:repeating-linear-gradient(#a0a0a0 0 1px,transparent 1px 2px);"></div>
<svg style="position:absolute;left:28px;top:3px;" width="12" height="14" viewBox="0 0 12 14"><path d="M6,0.5 L11.5,6.5 H8.5 V13.5 H3.5 V6.5 H0.5 Z" fill="#0000ff" stroke="#0000a0" stroke-width="0.5"/></svg>
<span id="t40" class="t ty" style="letter-spacing:-0.113px;left:49px;top:3px;color:#000;">Buy at Market</span>
<svg style="position:absolute;left:28px;top:57px;" width="12" height="14" viewBox="0 0 12 14"><path d="M6,13.5 L11.5,7.5 H8.5 V0.5 H3.5 V7.5 H0.5 Z" fill="#ff0000" stroke="#b00000" stroke-width="0.5"/></svg>
<span id="t41" class="t ty" style="letter-spacing:-0.173px;left:49px;top:57px;color:#000;">Sell at Market</span>
<div style="left:35px;top:29px;width:12px;height:1px;background:repeating-linear-gradient(90deg,#a0a0a0 0 1px,transparent 1px 2px);"></div>
<div style="left:67px;top:19px;width:154px;height:18px;background:#efefef;"></div>
<svg style="position:absolute;left:47px;top:22px;" width="16" height="13" viewBox="0 0 16 13"><path d="M8,0.5 L15.5,6.5 L8,12.5 L0.5,6.5 Z" fill="#3a9898" stroke="#2a7a7a" stroke-width="0.6"/><rect x="5" y="6" width="6" height="1.4" fill="#a8e0e0"/></svg>
<span id="t42" class="t ty" style="letter-spacing:-0.127px;left:69.5px;top:21px;color:#000;">Indicator crosses below a Value</span>
<div style="left:35px;top:47px;width:12px;height:1px;background:repeating-linear-gradient(90deg,#a0a0a0 0 1px,transparent 1px 2px);"></div>
<svg style="position:absolute;left:47px;top:40px;" width="16" height="13" viewBox="0 0 16 13"><path d="M8,0.5 L15.5,6.5 L8,12.5 L0.5,6.5 Z" fill="#3a9898" stroke="#2a7a7a" stroke-width="0.6"/><rect x="5" y="6" width="6" height="1.4" fill="#a8e0e0"/></svg>
<span id="t43" class="t ty" style="letter-spacing:-0.083px;left:69.5px;top:39px;color:#000;">Fast Moving Average is above Slow Moving Average</span>
<div style="left:35px;top:83px;width:12px;height:1px;background:repeating-linear-gradient(90deg,#a0a0a0 0 1px,transparent 1px 2px);"></div>
<svg style="position:absolute;left:47px;top:76px;" width="16" height="13" viewBox="0 0 16 13"><path d="M8,0.5 L15.5,6.5 L8,12.5 L0.5,6.5 Z" fill="#3a9898" stroke="#2a7a7a" stroke-width="0.6"/><rect x="5" y="6" width="6" height="1.4" fill="#a8e0e0"/></svg>
<span id="t44" class="t ty" style="letter-spacing:-0.097px;left:69.5px;top:75px;color:#000;">Indicator crosses above a Value</span>
<div style="left:35px;top:101px;width:12px;height:1px;background:repeating-linear-gradient(90deg,#a0a0a0 0 1px,transparent 1px 2px);"></div>
<div style="left:47px;top:92px;width:16px;height:16px;border:1px solid #9090f0;background:#fff;"></div>
<span id="t45" class="t ty" style="letter-spacing:0.500px;left:46px;top:93px;color:#101040;font-weight:bold;">OR</span>
<span id="t46" class="t ty" style="letter-spacing:-0.144px;left:69.5px;top:93px;color:#000;">OR Divider</span>
<div style="left:35px;top:119px;width:12px;height:1px;background:repeating-linear-gradient(90deg,#a0a0a0 0 1px,transparent 1px 2px);"></div>
<svg style="position:absolute;left:47px;top:112px;" width="16" height="13" viewBox="0 0 16 13"><path d="M8,0.5 L15.5,6.5 L8,12.5 L0.5,6.5 Z" fill="#3a9898" stroke="#2a7a7a" stroke-width="0.6"/><rect x="5" y="6" width="6" height="1.4" fill="#a8e0e0"/></svg>
<span id="t47" class="t ty" style="letter-spacing:-0.097px;left:69.5px;top:111px;color:#000;">Indicator crosses above a Value</span>
<div style="left:35px;top:137px;width:12px;height:1px;background:repeating-linear-gradient(90deg,#a0a0a0 0 1px,transparent 1px 2px);"></div>
<svg style="position:absolute;left:47px;top:130px;" width="16" height="13" viewBox="0 0 16 13"><path d="M8,0.5 L15.5,6.5 L8,12.5 L0.5,6.5 Z" fill="#3a9898" stroke="#2a7a7a" stroke-width="0.6"/><rect x="5" y="6" width="6" height="1.4" fill="#a8e0e0"/></svg>
<span id="t48" class="t ty" style="letter-spacing:-0.159px;left:69.5px;top:129px;color:#000;">Indicator turns up</span>
</div>
<div style="left:384px;top:369px;width:455px;height:129px;border:1px solid #dcdcdc;border-radius:2px;"></div>
<div style="left:391px;top:364px;width:216px;height:10px;background:#f0f0f0;"></div>
<span id="t49" class="t ty" style="letter-spacing:-0.230px;left:393px;top:364px;color:#000;">Parameters (change Rule Parameters below)</span>
<div style="left:395px;top:383px;width:30px;height:16px;border:1px solid #000;background:#fff;"></div>
<div style="left:397px;top:385px;width:26px;height:1px;background:#e4e4e4;"></div>
<div style="left:397px;top:396px;width:26px;height:1px;background:#e4e4e4;"></div>
<div style="left:397px;top:388px;width:26px;height:7px;border:1px solid #606060;background:#e8ffff;"></div>
<div style="left:413px;top:388px;width:2px;height:7px;background:#000;"></div>
<div style="left:431px;top:395px;width:41px;height:1px;background:#0000ff;"></div>
<span id="t50" class="t ty" style="letter-spacing:-0.025px;left:431px;top:383px;color:#0000ff;">Indicator</span>
<div style="left:431px;top:420px;width:27px;height:1px;background:#0000ff;"></div>
<span id="t51" class="t ty" style="letter-spacing:0.168px;left:431px;top:408px;color:#0000ff;">Value</span>
<div style="left:538px;top:383px;width:197px;height:20px;background:#f0f0f0;border:1px solid #7a7a7a;"></div>
<div style="left:539px;top:384px;width:195px;height:18px;border:1px solid #fff;border-right-color:#e0e0e0;border-bottom-color:#e0e0e0;"></div>
<div style="left:541px;top:398px;width:190px;height:1px;background:#000;"></div>
<span id="t52" class="t ty" style="letter-spacing:-0.178px;left:541px;top:386px;color:#000;">ZScore.Series(Close,10,StdDevCalculati</span>
<span id="t53" class="t ty" style="letter-spacing:-0.681px;left:736px;top:383px;color:#000;">crosse</span>
<div style="left:538px;top:407px;width:300px;height:20px;background:#fff;border:1px solid #9a9a9a;"></div>
<span id="t54" class="t ty" style="letter-spacing:-0.145px;left:541px;top:409px;color:#000;">-1.00</span>
<div style="left:384px;top:511px;width:455px;height:39px;border:1px solid #dcdcdc;border-radius:2px;"></div>
<div style="left:391px;top:505px;width:108px;height:10px;background:#f0f0f0;"></div>
<span id="t55" class="t ty" style="letter-spacing:-0.189px;left:393px;top:505px;color:#000;">Position Management</span>
<svg style="position:absolute;left:391px;top:527px;" width="14" height="14" viewBox="0 0 14 14"><circle cx="6.5" cy="6.5" r="6" fill="#fff" stroke="#333" stroke-width="1.2"/><circle cx="6.5" cy="6.5" r="3.5" fill="#333"/></svg>
<span id="t56" class="t ty" style="letter-spacing:-0.226px;left:411px;top:527px;color:#000;">Single open Position</span>
<svg style="position:absolute;left:518px;top:527px;" width="14" height="14" viewBox="0 0 14 14"><circle cx="6.5" cy="6.5" r="6" fill="#fff" stroke="#333" stroke-width="1.2"/></svg>
<span id="t57" class="t ty" style="letter-spacing:-0.199px;left:538px;top:527px;color:#000;">Multiple open Positions allowed</span>
<div style="left:765px;top:22px;width:309px;height:508px;background:#f0f0f0;border:1px solid #1883d7;box-shadow:0 5px 15px rgba(0,0,0,0.30);"></div>
<div style="left:766px;top:23px;width:307px;height:30px;background:#fff;"></div>
<span id="t58" class="t ty" style="letter-spacing:0.326px;left:775px;top:31px;color:#000;">Select an Indicator</span>
<div style="left:954px;top:37px;width:10px;height:1px;background:#000;"></div>
<div style="left:999px;top:32px;width:10px;height:10px;border:1px solid #000;"></div>
<svg style="position:absolute;left:1045px;top:32px;" width="10" height="10" viewBox="0 0 10 10"><path d="M0.5,0.5 L9.5,9.5 M9.5,0.5 L0.5,9.5" stroke="#000" stroke-width="1.1"/></svg>
<div style="left:779px;top:66px;width:281px;height:283px;background:#fff;border:1px solid #828790;"></div>
<div style="left:780px;top:67px;width:262px;height:281px;overflow:hidden;">
<div style="left:12px;top:0px;width:1px;height:290px;background:repeating-linear-gradient(#a0a0a0 0 1px,transparent 1px 2px);"></div>
<div style="left:31px;top:0px;width:1px;height:266px;background:repeating-linear-gradient(#a0a0a0 0 1px,transparent 1px 2px);"></div>
<div style="left:32px;top:9px;width:10px;height:1px;background:repeating-linear-gradient(90deg,#a0a0a0 0 1px,transparent 1px 2px);"></div>
<svg style="position:absolute;left:42px;top:2px;" width="17" height="14" viewBox="0 0 17 14"><path d="M2.2,6.5 C3.3,2.5 4.5,1 5.7,1.1 C7.3,1.3 9.3,7.5 10.6,11 C11.2,12.6 11.8,13 12.4,12.8 C13.3,12.3 14,10 14.5,7.3" fill="none" stroke="#1a3ee0" stroke-width="2.1" shape-rendering="auto"/></svg>
<span id="t59" class="t ty" style="letter-spacing:-0.491px;left:64px;top:2px;color:#000;">TSF</span>
<div style="left:32px;top:25px;width:10px;height:1px;background:repeating-linear-gradient(90deg,#a0a0a0 0 1px,transparent 1px 2px);"></div>
<svg style="position:absolute;left:42px;top:18px;" width="17" height="14" viewBox="0 0 17 14"><path d="M1.5,7 C2.6,3.2 4,0.6 5.8,0.6 C7.6,0.6 9,3.4 10,7 Z" fill="#0010ff" stroke="#3a6aff" stroke-width="0.9" shape-rendering="auto"/><path d="M4,4.2 C4.8,2.6 6.6,2.4 7.6,4.2" fill="none" stroke="#90b0ff" stroke-width="0.8" shape-rendering="auto"/><path d="M9.3,7.5 C10.4,11 11.6,13.6 12.6,13.6 C13.8,13.6 15,11 15.7,7.5 Z" fill="#ff0000" stroke="#2050ff" stroke-width="1.1" shape-rendering="auto"/><rect x="0" y="7" width="16" height="1" fill="#1a1a1a"/></svg>
<span id="t60" class="t ty" style="letter-spacing:-0.262px;left:64px;top:18px;color:#000;">TSI</span>
<div style="left:32px;top:41px;width:10px;height:1px;background:repeating-linear-gradient(90deg,#a0a0a0 0 1px,transparent 1px 2px);"></div>
<svg style="position:absolute;left:42px;top:34px;" width="17" height="14" viewBox="0 0 17 14"><path d="M2.2,6.5 C3.3,2.5 4.5,1 5.7,1.1 C7.3,1.3 9.3,7.5 10.6,11 C11.2,12.6 11.8,13 12.4,12.8 C13.3,12.3 14,10 14.5,7.3" fill="none" stroke="#1a3ee0" stroke-width="2.1" shape-rendering="auto"/></svg>
<span id="t61" class="t ty" style="letter-spacing:-0.073px;left:64px;top:34px;color:#000;">Turnover</span>
<div style="left:32px;top:57px;width:10px;height:1px;background:repeating-linear-gradient(90deg,#a0a0a0 0 1px,transparent 1px 2px);"></div>
<svg style="position:absolute;left:42px;top:50px;" width="17" height="14" viewBox="0 0 17 14"><path d="M2.2,6.5 C3.3,2.5 4.5,1 5.7,1.1 C7.3,1.3 9.3,7.5 10.6,11 C11.2,12.6 11.8,13 12.4,12.8 C13.3,12.3 14,10 14.5,7.3" fill="none" stroke="#1a3ee0" stroke-width="2.1" shape-rendering="auto"/></svg>
<span id="t62" class="t ty" style="letter-spacing:-0.163px;left:64px;top:50px;color:#000;">TwiggsMoneyFlow</span>
<div style="left:32px;top:73px;width:10px;height:1px;background:repeating-linear-gradient(90deg,#a0a0a0 0 1px,transparent 1px 2px);"></div>
<svg style="position:absolute;left:42px;top:66px;" width="17" height="14" viewBox="0 0 17 14"><path d="M1.5,7 C2.6,3.2 4,0.6 5.8,0.6 C7.6,0.6 9,3.4 10,7 Z" fill="#0010ff" stroke="#3a6aff" stroke-width="0.9" shape-rendering="auto"/><path d="M4,4.2 C4.8,2.6 6.6,2.4 7.6,4.2" fill="none" stroke="#90b0ff" stroke-width="0.8" shape-rendering="auto"/><path d="M9.3,7.5 C10.4,11 11.6,13.6 12.6,13.6 C13.8,13.6 15,11 15.7,7.5 Z" fill="#ff0000" stroke="#2050ff" stroke-width="1.1" shape-rendering="auto"/><rect x="0" y="7" width="16" height="1" fill="#1a1a1a"/></svg>
<span id="t63" class="t ty" style="letter-spacing:-0.139px;left:64px;top:66px;color:#000;">UDIDSRI</span>
<div style="left:32px;top:89px;width:10px;height:1px;background:repeating-linear-gradient(90deg,#a0a0a0 0 1px,transparent 1px 2px);"></div>
<svg style="position:absolute;left:42px;top:82px;" width="17" height="14" viewBox="0 0 17 14"><path d="M1.5,7 C2.6,3.2 4,0.6 5.8,0.6 C7.6,0.6 9,3.4 10,7 Z" fill="#0010ff" stroke="#3a6aff" stroke-width="0.9" shape-rendering="auto"/><path d="M4,4.2 C4.8,2.6 6.6,2.4 7.6,4.2" fill="none" stroke="#90b0ff" stroke-width="0.8" shape-rendering="auto"/><path d="M9.3,7.5 C10.4,11 11.6,13.6 12.6,13.6 C13.8,13.6 15,11 15.7,7.5 Z" fill="#ff0000" stroke="#2050ff" stroke-width="1.1" shape-rendering="auto"/><rect x="0" y="7" width="16" height="1" fill="#1a1a1a"/></svg>
<span id="t64" class="t ty" style="letter-spacing:-0.239px;left:64px;top:82px;color:#000;">UltimateOsc2</span>
<div style="left:32px;top:105px;width:10px;height:1px;background:repeating-linear-gradient(90deg,#a0a0a0 0 1px,transparent 1px 2px);"></div>
<svg style="position:absolute;left:42px;top:98px;" width="17" height="14" viewBox="0 0 17 14"><path d="M2.2,6.5 C3.3,2.5 4.5,1 5.7,1.1 C7.3,1.3 9.3,7.5 10.6,11 C11.2,12.6 11.8,13 12.4,12.8 C13.3,12.3 14,10 14.5,7.3" fill="none" stroke="#1a3ee0" stroke-width="2.1" shape-rendering="auto"/></svg>
<span id="t65" class="t ty" style="letter-spacing:-0.143px;left:64px;top:98px;color:#000;">UpDownVolume</span>
<div style="left:32px;top:121px;width:10px;height:1px;background:repeating-linear-gradient(90deg,#a0a0a0 0 1px,transparent 1px 2px);"></div>
<svg style="position:absolute;left:42px;top:114px;" width="17" height="14" viewBox="0 0 17 14"><path d="M2.2,6.5 C3.3,2.5 4.5,1 5.7,1.1 C7.3,1.3 9.3,7.5 10.6,11 C11.2,12.6 11.8,13 12.4,12.8 C13.3,12.3 14,10 14.5,7.3" fill="none" stroke="#1a3ee0" stroke-width="2.1" shape-rendering="auto"/></svg>
<span id="t66" class="t ty" style="letter-spacing:-0.090px;left:64px;top:114px;color:#000;">VarianceRatio</span>
<div style="left:32px;top:137px;width:10px;height:1px;background:repeating-linear-gradient(90deg,#a0a0a0 0 1px,transparent 1px 2px);"></div>
<svg style="position:absolute;left:42px;top:130px;" width="17" height="14" viewBox="0 0 17 14"><path d="M0,4.5 H6 L11,2.5 H16 M0,11.3 H6 L11,9.4 H16" fill="none" stroke="#5a5aff" stroke-width="1.3" shape-rendering="auto"/><path d="M0,8.3 H6 L11,6.4 H16" fill="none" stroke="#10108a" stroke-width="1.4" shape-rendering="auto"/></svg>
<span id="t67" class="t ty" style="letter-spacing:-0.177px;left:64px;top:130px;color:#000;">VK_SH_Band</span>
<div style="left:32px;top:153px;width:10px;height:1px;background:repeating-linear-gradient(90deg,#a0a0a0 0 1px,transparent 1px 2px);"></div>
<svg style="position:absolute;left:42px;top:146px;" width="17" height="14" viewBox="0 0 17 14"><path d="M0,4.5 H6 L11,2.5 H16 M0,11.3 H6 L11,9.4 H16" fill="none" stroke="#5a5aff" stroke-width="1.3" shape-rendering="auto"/><path d="M0,8.3 H6 L11,6.4 H16" fill="none" stroke="#10108a" stroke-width="1.4" shape-rendering="auto"/></svg>
<span id="t68" class="t ty" style="letter-spacing:-0.196px;left:64px;top:146px;color:#000;">VK_SL_Band</span>
<div style="left:32px;top:169px;width:10px;height:1px;background:repeating-linear-gradient(90deg,#a0a0a0 0 1px,transparent 1px 2px);"></div>
<svg style="position:absolute;left:42px;top:162px;" width="17" height="14" viewBox="0 0 17 14"><path d="M0,4.5 H6 L11,2.5 H16 M0,11.3 H6 L11,9.4 H16" fill="none" stroke="#5a5aff" stroke-width="1.3" shape-rendering="auto"/><path d="M0,8.3 H6 L11,6.4 H16" fill="none" stroke="#10108a" stroke-width="1.4" shape-rendering="auto"/></svg>
<span id="t69" class="t ty" style="letter-spacing:-0.049px;left:64px;top:162px;color:#000;">VK_WH_Band</span>
<div style="left:32px;top:185px;width:10px;height:1px;background:repeating-linear-gradient(90deg,#a0a0a0 0 1px,transparent 1px 2px);"></div>
<svg style="position:absolute;left:42px;top:178px;" width="17" height="14" viewBox="0 0 17 14"><path d="M0,4.5 H6 L11,2.5 H16 M0,11.3 H6 L11,9.4 H16" fill="none" stroke="#5a5aff" stroke-width="1.3" shape-rendering="auto"/><path d="M0,8.3 H6 L11,6.4 H16" fill="none" stroke="#10108a" stroke-width="1.4" shape-rendering="auto"/></svg>
<span id="t70" class="t ty" style="letter-spacing:-0.090px;left:64px;top:178px;color:#000;">VK_WL_Band</span>
<div style="left:32px;top:201px;width:10px;height:1px;background:repeating-linear-gradient(90deg,#a0a0a0 0 1px,transparent 1px 2px);"></div>
<svg style="position:absolute;left:42px;top:194px;" width="17" height="14" viewBox="0 0 17 14"><path d="M2.2,6.5 C3.3,2.5 4.5,1 5.7,1.1 C7.3,1.3 9.3,7.5 10.6,11 C11.2,12.6 11.8,13 12.4,12.8 C13.3,12.3 14,10 14.5,7.3" fill="none" stroke="#1a3ee0" stroke-width="2.1" shape-rendering="auto"/></svg>
<span id="t71" class="t ty" style="letter-spacing:-0.703px;left:64px;top:194px;color:#000;">VPT</span>
<div style="left:32px;top:217px;width:10px;height:1px;background:repeating-linear-gradient(90deg,#a0a0a0 0 1px,transparent 1px 2px);"></div>
<svg style="position:absolute;left:42px;top:210px;" width="17" height="14" viewBox="0 0 17 14"><path d="M2.2,6.5 C3.3,2.5 4.5,1 5.7,1.1 C7.3,1.3 9.3,7.5 10.6,11 C11.2,12.6 11.8,13 12.4,12.8 C13.3,12.3 14,10 14.5,7.3" fill="none" stroke="#1a3ee0" stroke-width="2.1" shape-rendering="auto"/></svg>
<span id="t72" class="t ty" style="letter-spacing:0.200px;left:64px;top:210px;color:#000;">VWAP</span>
<div style="left:32px;top:233px;width:10px;height:1px;background:repeating-linear-gradient(90deg,#a0a0a0 0 1px,transparent 1px 2px);"></div>
<svg style="position:absolute;left:42px;top:226px;" width="17" height="14" viewBox="0 0 17 14"><path d="M2.2,6.5 C3.3,2.5 4.5,1 5.7,1.1 C7.3,1.3 9.3,7.5 10.6,11 C11.2,12.6 11.8,13 12.4,12.8 C13.3,12.3 14,10 14.5,7.3" fill="none" stroke="#1a3ee0" stroke-width="2.1" shape-rendering="auto"/></svg>
<span id="t73" class="t ty" style="letter-spacing:0.167px;left:64px;top:226px;color:#000;">WLMA</span>
<div style="left:32px;top:249px;width:10px;height:1px;background:repeating-linear-gradient(90deg,#a0a0a0 0 1px,transparent 1px 2px);"></div>
<svg style="position:absolute;left:42px;top:242px;" width="17" height="14" viewBox="0 0 17 14"><path d="M2.2,6.5 C3.3,2.5 4.5,1 5.7,1.1 C7.3,1.3 9.3,7.5 10.6,11 C11.2,12.6 11.8,13 12.4,12.8 C13.3,12.3 14,10 14.5,7.3" fill="none" stroke="#1a3ee0" stroke-width="2.1" shape-rendering="auto"/></svg>
<span id="t74" class="t ty" style="letter-spacing:-0.142px;left:64px;top:242px;color:#000;">YTDGain</span>
<div style="left:32px;top:265px;width:10px;height:1px;background:repeating-linear-gradient(90deg,#a0a0a0 0 1px,transparent 1px 2px);"></div>
<svg style="position:absolute;left:42px;top:258px;" width="17" height="14" viewBox="0 0 17 14"><path d="M1.5,7 C2.6,3.2 4,0.6 5.8,0.6 C7.6,0.6 9,3.4 10,7 Z" fill="#0010ff" stroke="#3a6aff" stroke-width="0.9" shape-rendering="auto"/><path d="M4,4.2 C4.8,2.6 6.6,2.4 7.6,4.2" fill="none" stroke="#90b0ff" stroke-width="0.8" shape-rendering="auto"/><path d="M9.3,7.5 C10.4,11 11.6,13.6 12.6,13.6 C13.8,13.6 15,11 15.7,7.5 Z" fill="#ff0000" stroke="#2050ff" stroke-width="1.1" shape-rendering="auto"/><rect x="0" y="7" width="16" height="1" fill="#1a1a1a"/></svg>
<div style="left:61px;top:257px;width:39px;height:16px;background:#0078d7;"></div>
<span id="t75" class="t ty" style="letter-spacing:0.006px;left:64px;top:258px;color:#fff;">ZScore</span>
<svg style="position:absolute;left:8px;top:276px;" width="9" height="9" viewBox="0 0 9 9" shape-rendering="crispEdges"><rect x="0.5" y="0.5" width="8" height="8" fill="#f4f4f4" stroke="#9a9a9a"/><path d="M2,4.5 H7 M4.5,2 V7" stroke="#2040a0"/></svg>
<svg style="position:absolute;left:22px;top:274px;" width="16" height="14" viewBox="0 0 16 14" shape-rendering="crispEdges"><path d="M1,2 H7 L8,3 H13 V7 H1 Z" fill="#fff7a0"/><path d="M0.5,12 V2.5 L1.5,1.5 H7 L8,2.5 H13.5 V6" fill="none" stroke="#c8c028"/><path d="M3.5,6.5 H15.5 L13,12.5 H0.8 Z" fill="#fff3a8" shape-rendering="auto"/><path d="M8,9 h1v1h-1z M10,8 h1v1h-1z M12,9 h1v1h-1z M9,11 h1v1h-1z M11,11 h1v1h-1z M6,11 h1v1h-1z" fill="#f8c890"/><path d="M3.5,6.5 H15 M0.8,12 L3.5,6.5" fill="none" stroke="#c8c028" shape-rendering="auto"/><path d="M15.5,6.5 L13,13 H1" fill="none" stroke="#000" stroke-width="1.2" shape-rendering="auto"/></svg>
<span id="t76" class="t ty" style="letter-spacing:-0.428px;left:45px;top:275px;color:#000;">NeuroLab&#174;</span>
</div>
<div style="left:1042px;top:67px;width:17px;height:281px;background:#f0f0f0;"></div>
<div style="left:1042px;top:304px;width:15px;height:22px;background:#cdcdcd;"></div>
<svg style="position:absolute;left:1045px;top:74px;" width="9" height="6" viewBox="0 0 9 6"><path d="M0.8,5.2 L4.5,1.5 L8.2,5.2" fill="none" stroke="#606060" stroke-width="2.4" shape-rendering="auto"/></svg>
<svg style="position:absolute;left:1045px;top:335px;" width="9" height="6" viewBox="0 0 9 6"><path d="M0.8,0.8 L4.5,4.5 L8.2,0.8" fill="none" stroke="#606060" stroke-width="2.4" shape-rendering="auto"/></svg>
<div style="left:774px;top:362px;width:287px;height:128px;border:1px solid #dcdcdc;border-radius:2px;"></div>
<div style="left:781px;top:356px;width:102px;height:10px;background:#f0f0f0;"></div>
<span id="t77" class="t ty" style="letter-spacing:-0.243px;left:784px;top:356px;color:#000;">Indicator Parameters</span>
<div style="left:790px;top:406px;width:55px;height:1px;background:#0000ff;"></div>
<span id="t78" class="t ty" style="letter-spacing:-0.148px;left:790px;top:394px;color:#0000ff;">Data Series</span>
<div style="left:790px;top:431px;width:30px;height:1px;background:#0000ff;"></div>
<span id="t79" class="t ty" style="letter-spacing:-0.159px;left:790px;top:419px;color:#0000ff;">Period</span>
<div style="left:790px;top:456px;width:84px;height:1px;background:#0000ff;"></div>
<span id="t80" class="t ty" style="letter-spacing:0.000px;left:790px;top:444px;color:#0000ff;">StDev calculation</span>
<div style="left:898px;top:394px;width:121px;height:21px;background:#e5e5e5;border:1px solid #adadad;"></div>
<span id="t81" class="t ty" style="letter-spacing:-0.281px;left:903px;top:399px;color:#000;">Close</span>
<svg style="position:absolute;left:1005px;top:402px;" width="10" height="6" viewBox="0 0 10 6"><path d="M0.5,0.5 L5,5 L9.5,0.5" fill="none" stroke="#333" stroke-width="1" shape-rendering="auto"/></svg>
<div style="left:898px;top:419px;width:120px;height:20px;background:#fff;border:1px solid #a0a0a0;"></div>
<span id="t82" class="t ty" style="letter-spacing:-0.750px;left:902px;top:422px;color:#000;">10</span>
<div style="left:1002px;top:421px;width:14px;height:16px;background:#f0f0f0;border:1px solid #a8a8a8;border-top-color:#e8e8e8;"></div>
<div style="left:1003px;top:428px;width:12px;height:2px;background:#c4c4c4;"></div>
<svg style="position:absolute;left:1006px;top:423px;" width="5" height="3" viewBox="0 0 5 3" shape-rendering="crispEdges"><path d="M2,0 H3 V1 H4 V2 H5 V3 H0 V2 H1 V1 H2 Z" fill="#000"/></svg>
<svg style="position:absolute;left:1006px;top:431px;" width="5" height="3" viewBox="0 0 5 3" shape-rendering="crispEdges"><path d="M0,0 H5 V1 H4 V2 H3 V3 H2 V2 H1 V1 H0 Z" fill="#000"/></svg>
<div style="left:898px;top:444px;width:121px;height:21px;background:#e5e5e5;border:1px solid #adadad;"></div>
<span id="t83" class="t ty" style="letter-spacing:-0.111px;left:903px;top:448px;color:#000;">Population</span>
<svg style="position:absolute;left:1005px;top:452px;" width="10" height="6" viewBox="0 0 10 6"><path d="M0.5,0.5 L5,5 L9.5,0.5" fill="none" stroke="#333" stroke-width="1" shape-rendering="auto"/></svg>
<div style="left:905px;top:499px;width:73px;height:21px;background:#e1e1e1;border:2px solid #0078d7;"></div>
<span id="t84" class="t ty" style="letter-spacing:0.094px;left:933px;top:503px;color:#000;">OK</span>
<div style="left:986px;top:499px;width:73px;height:21px;background:#e1e1e1;border:1px solid #adadad;"></div>
<span id="t85" class="t ty" style="letter-spacing:0.050px;left:1005px;top:503px;color:#000;">Cancel</span>
<svg style="position:absolute;left:640px;top:320px;" width="170" height="70" viewBox="0 0 170 70"><g transform="translate(-640,-320)" stroke="#22b04a" stroke-width="3.2" stroke-linecap="butt" fill="none"><path d="M797,334 L667,376"/><path d="M677,365 L665,376.5 L685,377" stroke-linejoin="bevel"/></g></svg>
</body></html>
